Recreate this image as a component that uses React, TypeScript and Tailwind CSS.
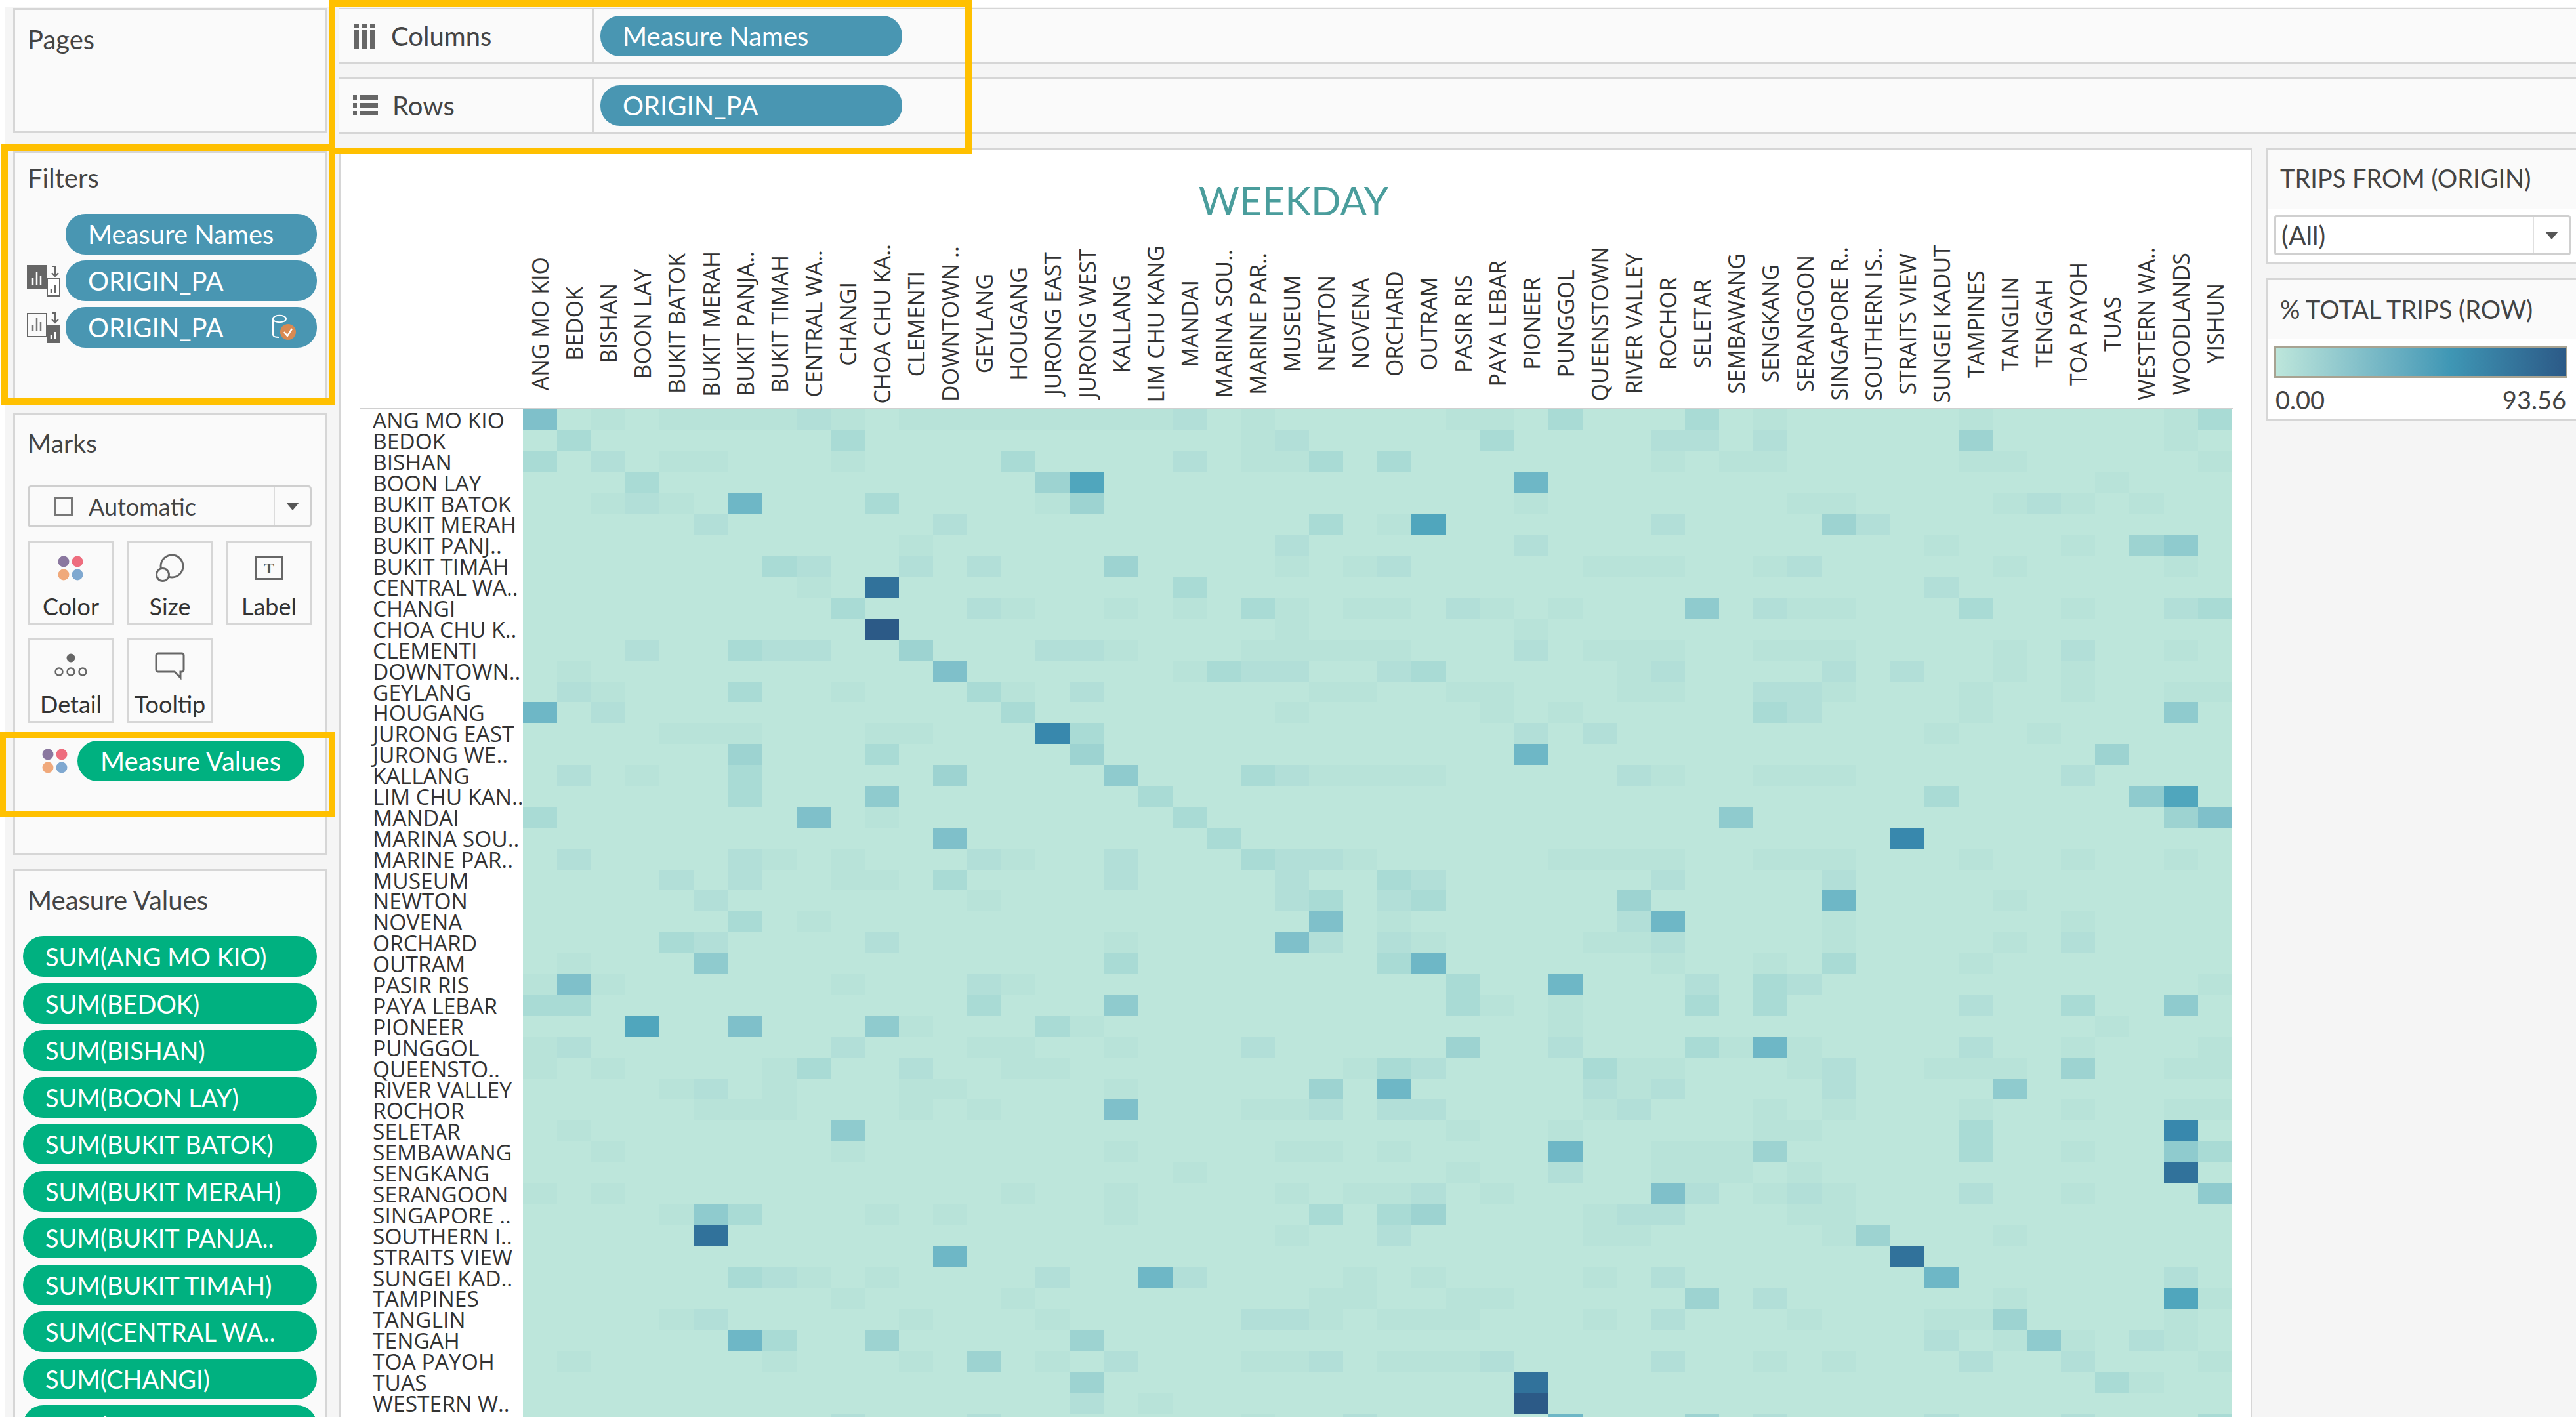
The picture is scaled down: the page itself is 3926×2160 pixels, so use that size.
import React from 'react';

/* ── Data ─────────────────────────────────────── */

const COLUMNS = [
  'ANG MO KIO', 'BEDOK', 'BISHAN', 'BOON LAY', 'BUKIT BATOK', 'BUKIT MERAH', 'BUKIT PANJA..', 'BUKIT TIMAH',
  'CENTRAL WA..', 'CHANGI', 'CHOA CHU KA..', 'CLEMENTI', 'DOWNTOWN ..', 'GEYLANG', 'HOUGANG', 'JURONG EAST',
  'JURONG WEST', 'KALLANG', 'LIM CHU KANG', 'MANDAI', 'MARINA SOU..', 'MARINE PAR..', 'MUSEUM', 'NEWTON',
  'NOVENA', 'ORCHARD', 'OUTRAM', 'PASIR RIS', 'PAYA LEBAR', 'PIONEER', 'PUNGGOL', 'QUEENSTOWN', 'RIVER VALLEY',
  'ROCHOR', 'SELETAR', 'SEMBAWANG', 'SENGKANG', 'SERANGOON', 'SINGAPORE R..', 'SOUTHERN IS..', 'STRAITS VIEW',
  'SUNGEI KADUT', 'TAMPINES', 'TANGLIN', 'TENGAH', 'TOA PAYOH', 'TUAS', 'WESTERN WA..', 'WOODLANDS', 'YISHUN',
];

const LEVELS = [
  '#bde6db', '#b8e3d9', '#b2dfd8', '#a9dbd5', '#9dd3d1', '#8fcbce', '#7fc0ca', '#6eb7c6',
  '#50a6bd', '#3888ad', '#31729b', '#2c5a87',
];

// row label, then "column:level" pairs for every cell darker than the base colour
const ROWS: [string, string][] = [
  ['ANG MO KIO', '0:6 2:1 4:1 5:1 6:1 7:1 8:2 9:1 11:1 12:1 13:1 14:1 15:1 16:1 17:1 18:1 19:2 21:1 27:1 28:1 30:3 34:3 36:1 42:1 48:1 49:3'],
  ['BEDOK', '1:3 9:3 21:1 22:2 28:3 33:2 34:2 36:2 42:4 48:1'],
  ['BISHAN', '0:3 2:2 4:1 5:1 9:1 14:3 19:2 21:1 22:1 23:3 25:3 33:1 35:1 36:1 42:1 43:1 49:1'],
  ['BOON LAY', '3:3 15:4 16:8 29:7 46:1'],
  ['BUKIT BATOK', '2:1 3:2 4:1 6:7 10:3 15:1 16:4 29:1 37:1 38:1 43:1 44:2 45:1 47:1'],
  ['BUKIT MERAH', '5:2 12:2 23:3 25:1 26:8 33:2 38:4 39:2'],
  ['BUKIT PANJ..', '11:1 22:2 29:2 41:1 45:1 47:4 48:5'],
  ['BUKIT TIMAH', '7:3 8:2 11:2 13:2 17:4 22:1 24:1 25:2 31:1 32:1 33:1 36:1 37:2 43:1 48:1'],
  ['CENTRAL WA..', '8:1 10:10 19:3 41:2'],
  ['CHANGI', '9:3 13:2 14:1 17:1 19:1 21:3 22:1 24:1 25:1 27:2 28:1 30:1 34:5 36:2 37:1 38:1 42:3 45:1 48:2 49:3'],
  ['CHOA CHU K..', '10:11 22:1 29:1'],
  ['CLEMENTI', '3:2 6:3 7:2 8:2 11:4 15:2 16:2 17:1 21:1 22:1 23:1 24:1 25:1 29:2 31:1 32:1 33:1 36:1 37:1 38:1 43:1 45:2 48:1'],
  ['DOWNTOWN..', '1:1 12:6 19:1 20:3 21:2 22:2 25:2 26:3 32:1 33:2 38:2 40:2 43:1 45:1'],
  ['GEYLANG', '1:2 2:1 6:3 9:1 13:3 14:1 16:2 23:1 24:1 27:1 28:1 32:1 33:1 36:2 37:2 38:1 42:1 45:1 48:1 49:1'],
  ['HOUGANG', '0:7 2:2 14:3 22:1 28:1 30:1 36:3 37:2 42:1 48:5'],
  ['JURONG EAST', '4:1 5:1 6:1 10:1 11:1 15:9 16:3 29:2 31:2 41:1 44:1'],
  ['JURONG WE..', '6:4 10:3 16:4 29:7 46:4'],
  ['KALLANG', '1:2 3:1 6:3 12:4 17:5 21:3 22:2 23:1 24:1 25:1 26:1 32:2 33:1 36:1 37:1 38:1 45:2'],
  ['LIM CHU KAN..', '6:3 10:5 18:3 41:3 47:5 48:8'],
  ['MANDAI', '0:3 8:6 10:1 19:3 35:5 48:4 49:6'],
  ['MARINA SOU..', '12:6 20:3 40:9'],
  ['MARINE PAR..', '1:2 6:2 7:1 9:1 13:2 14:1 17:2 21:3 22:2 23:2 24:1 30:1 31:1 32:1 33:1 36:1 37:1 38:1 42:1 45:1 48:1'],
  ['MUSEUM', '4:2 6:2 9:1 10:1 12:3 17:2 22:2 25:3 26:2 33:2 38:2'],
  ['NEWTON', '5:2 13:1 22:2 23:3 25:2 26:3 32:4 38:7 43:1'],
  ['NOVENA', '6:3 8:1 23:6 25:1 32:2 33:7 38:1 45:1'],
  ['ORCHARD', '4:3 5:2 10:2 17:1 22:6 23:2 25:2 26:1 31:1 32:1 33:2 38:1 43:1 45:2'],
  ['OUTRAM', '1:1 5:5 17:3 25:3 26:7 33:1 36:1 38:3 42:1'],
  ['PASIR RIS', '0:1 1:6 2:1 9:1 13:2 14:1 27:3 30:7 34:2 36:3 37:2 49:1'],
  ['PAYA LEBAR', '0:3 1:3 13:3 17:5 27:3 28:1 30:1 34:3 36:3 42:2 45:3 48:5'],
  ['PIONEER', '3:8 6:6 10:5 11:1 15:3 16:1 30:1 46:1'],
  ['PUNGGOL', '0:1 1:2 9:2 13:1 14:1 17:1 21:2 27:4 30:2 34:3 35:1 36:7 37:1 42:2 45:1 49:1'],
  ['QUEENSTO..', '0:1 2:1 7:1 8:3 11:2 14:1 15:1 24:1 25:3 26:2 31:3 32:1 33:1 37:1 38:2 41:1 42:1 43:1 45:4 48:1 49:1'],
  ['RIVER VALLEY', '4:1 5:2 7:1 11:1 12:1 17:1 23:4 25:7 31:2 32:1 33:2 38:2 43:5'],
  ['ROCHOR', '5:1 6:1 7:1 11:1 13:1 17:6 21:1 22:1 23:2 25:2 26:2 31:1 32:2 36:1 38:1 42:1 45:1 48:1 49:1'],
  ['SELETAR', '1:1 9:5 27:1 30:1 36:1 37:1 42:3 48:9'],
  ['SEMBAWANG', '2:1 9:1 17:1 22:1 23:1 25:1 30:7 33:1 34:1 35:1 36:4 42:3 45:1 48:5 49:3'],
  ['SENGKANG', '19:1 27:1 30:2 33:1 34:1 35:1 37:1 48:10'],
  ['SERANGOON', '0:1 2:1 14:1 17:1 22:1 24:1 25:1 26:2 28:1 33:6 34:2 36:1 37:2 38:1 42:2 45:1 49:5'],
  ['SINGAPORE ..', '4:1 5:5 6:3 10:1 12:1 17:1 23:3 25:3 26:4 31:1 32:2 33:2 37:1 38:1'],
  ['SOUTHERN I..', '5:10 22:1 25:2 31:1 32:1 38:1 39:4 43:1'],
  ['STRAITS VIEW', '12:7 40:10'],
  ['SUNGEI KAD..', '6:3 7:2 8:1 10:1 15:2 18:7 19:2 24:1 26:1 31:1 33:2 41:7 48:2'],
  ['TAMPINES', '9:1 14:1 23:1 24:1 27:1 28:1 34:4 36:2 43:1 48:8 49:1'],
  ['TANGLIN', '4:1 5:2 11:1 15:1 21:2 22:2 23:1 25:1 26:1 27:1 31:1 33:2 37:1 41:1 42:1 43:4 48:1'],
  ['TENGAH', '6:7 7:3 10:4 16:4 41:2 43:1 44:5 45:1 47:2 48:1'],
  ['TOA PAYOH', '1:1 7:1 11:1 13:4 15:1 17:2 21:1 22:1 23:2 25:1 26:1 27:1 28:2 33:2 36:1 38:1 42:2 45:2 49:1'],
  ['TUAS', '16:4 29:10 46:3 47:1'],
  ['WESTERN W..', '16:2 18:1 29:11'],
  ['WOODLANDS', '9:2 13:2 21:1 24:2 30:7 34:4 36:2 41:2 45:2 49:3'],
];

const MEASURES = [
  'SUM(ANG MO KIO)', 'SUM(BEDOK)', 'SUM(BISHAN)', 'SUM(BOON LAY)', 'SUM(BUKIT BATOK)', 'SUM(BUKIT MERAH)',
  'SUM(BUKIT PANJA..', 'SUM(BUKIT TIMAH)', 'SUM(CENTRAL WA..', 'SUM(CHANGI)', 'SUM(CHOA CHU KA..',
];

const cellsFor = (spec: string) => {
  const out = new Array<number>(50).fill(0);
  spec.split(' ').forEach(pair => {
    const [c, l] = pair.split(':').map(Number);
    out[c] = l;
  });
  return out;
};

/* ── Small parts ──────────────────────────────── */

const ColorDots: React.FC = () => (
  <svg width="40" height="40" viewBox="0 0 40 40">
    <circle cx="9" cy="10" r="8.5" fill="#8a779f" />
    <circle cx="30" cy="10" r="8.5" fill="#ee6d7e" />
    <circle cx="9" cy="30" r="8.5" fill="#f0a97b" />
    <circle cx="30" cy="30" r="8.5" fill="#7fa8d0" />
  </svg>
);

const BluePill: React.FC<{ children: React.ReactNode; className?: string }> = ({ children, className }) => (
  <div className={`h-[62px] rounded-[30px] bg-[#4996b2] text-white text-[40px] leading-[60px] pl-[34px] flex items-center justify-between ${className ?? ''}`}>
    {children}
  </div>
);

const ShelfIcon: React.FC<{ filled: boolean }> = ({ filled }) => (
  <svg width="52" height="48" viewBox="0 0 52 48" className="shrink-0">
    <rect x="1" y={filled ? 1 : 3} width="29" height="35" fill={filled ? '#666' : 'none'} stroke="#666" strokeWidth="2" />
    <path d="M9 30V20M15 30V10M21 30V16" stroke={filled ? '#fff' : '#777'} strokeWidth="2.5" fill="none" />
    <path d="M38 2h5v14m-5-4 5 5 5-5" stroke="#666" strokeWidth="2" fill="none" />
    <rect x="31" y={21} width="19" height="26" fill={filled ? '#fff' : '#666'} stroke="#666" strokeWidth="2" />
    <path d="M37 42v-6M43 42V31" stroke={filled ? '#666' : '#fff'} strokeWidth="2.5" fill="none" />
  </svg>
);

const Card: React.FC<{ label: string; children: React.ReactNode }> = ({ label, children }) => (
  <div className="w-[132px] h-[129px] border-[3px] border-[#d6d6d6] flex flex-col items-center pt-[17px] text-[36px] leading-[44px] text-[#333]">
    <div className="h-[44px] flex items-center justify-center">{children}</div>
    <div className="mt-[14px]">{label}</div>
  </div>
);

const Arrow: React.FC = () => (
  <svg width="22" height="14" viewBox="0 0 22 14">
    <polygon points="1,1 21,1 11,13" fill="#555" />
  </svg>
);

/* ── App ──────────────────────────────────────── */

export default function App() {
  return (
    <div className="relative w-[3926px] h-[2160px] overflow-hidden bg-white pl-[7px] pt-[10px] font-[Lato,sans-serif] text-[#444]">
      <div className="flex h-full bg-[#f5f5f5]">
        {/* Left cards */}
        <div className="w-[510px] shrink-0 pl-[13px] pt-[2px] flex flex-col gap-[20px] overflow-hidden">
          <div className="w-[478px] h-[190px] shrink-0 border-[3px] border-[#d6d6d6] bg-[#fafafa] pl-[19px] pt-[22px] text-[40px] leading-[46px] mb-[8px]">
            Pages
          </div>

          <div className="w-[478px] h-[379px] shrink-0 border-[3px] border-[#d6d6d6] bg-[#fafafa] pl-[19px] pt-[15px] text-[40px] leading-[46px]">
            Filters
            <div className="mt-[32px] flex flex-col gap-[9px]">
              <BluePill className="ml-[58px] w-[383px]">Measure Names</BluePill>
              <div className="flex items-center gap-[7px] -ml-[1px]">
                <ShelfIcon filled />
                <BluePill className="w-[383px]">ORIGIN_PA</BluePill>
              </div>
              <div className="flex items-center gap-[7px] -ml-[1px]">
                <ShelfIcon filled={false} />
                <BluePill className="w-[383px] pr-[30px]">
                  ORIGIN_PA
                  <svg width="40" height="40" viewBox="0 0 40 40">
                    <path d="M3 7v24c0 3 3 4 9 4M3 7c0-7 20-7 20 0s-20 7-20 0" fill="none" stroke="#fff" strokeWidth="2" />
                    <circle cx="26" cy="27" r="12" fill="#d98a52" />
                    <path d="M20 27l5 6 7-11" fill="none" stroke="#fff" strokeWidth="2.5" />
                  </svg>
                </BluePill>
              </div>
            </div>
          </div>

          <div className="w-[478px] h-[675px] shrink-0 border-[3px] border-[#d6d6d6] bg-[#fafafa] pl-[19px] pt-[20px] text-[39px] leading-[46px]">
            Marks
            <div className="mt-[42px] w-[433px] h-[64px] border-[3px] border-[#cfcfcf] rounded-[5px] flex items-center text-[#444]">
              <div className="flex-1 flex items-center pl-[38px] gap-[24px]">
                <div className="w-[28px] h-[28px] border-[3px] border-[#777]" />
                <span className="text-[36px]">Automatic</span>
              </div>
              <div className="w-[55px] h-full border-l-[2px] border-[#dcdcdc] flex items-center justify-center">
                <Arrow />
              </div>
            </div>
            <div className="mt-[20px] w-[440px] flex flex-wrap gap-x-[19px] gap-y-[20px]">
              <Card label="Color"><ColorDots /></Card>
              <Card label="Size">
                <svg width="44" height="44" viewBox="0 0 44 44" fill="none" stroke="#666" strokeWidth="3">
                  <circle cx="25" cy="19" r="17" />
                  <circle cx="11" cy="32" r="9.5" fill="#fafafa" />
                </svg>
              </Card>
              <Card label="Label">
                <div className="w-[43px] h-[36px] border-[3px] border-[#666] flex items-center justify-center font-['Liberation_Serif',serif] font-bold text-[24px] leading-none text-[#555]">
                  T
                </div>
              </Card>
              <Card label="Detail">
                <svg width="50" height="38" viewBox="0 0 50 38" fill="none" stroke="#666" strokeWidth="2.5">
                  <circle cx="25" cy="7" r="6.5" fill="#666" stroke="none" />
                  <circle cx="7" cy="28" r="5.5" />
                  <circle cx="25" cy="28" r="5.5" />
                  <circle cx="43" cy="28" r="5.5" />
                </svg>
              </Card>
              <Card label="Tooltip">
                <svg width="46" height="42" viewBox="0 0 46 42" fill="none" stroke="#666" strokeWidth="3">
                  <path d="M5 2h36a3 3 0 0 1 3 3v22a3 3 0 0 1-3 3h-2v9l-9-9H5a3 3 0 0 1-3-3V5a3 3 0 0 1 3-3z" />
                </svg>
              </Card>
            </div>
            <div className="mt-[27px] flex items-center gap-[14px] pl-[22px]">
              <ColorDots />
              <div className="w-[346px] h-[62px] rounded-[31px] bg-[#00b180] text-white text-[40px] flex items-center pl-[35px]">
                Measure Values
              </div>
            </div>
          </div>

          <div className="w-[478px] flex-1 min-h-0 border-[3px] border-b-0 border-[#d6d6d6] bg-[#fafafa] pt-[22px] text-[40px] leading-[46px]">
            <div className="pl-[19px]">Measure Values</div>
            <div className="mt-[32px] pl-[12px] flex flex-col gap-[9.5px]">
              {MEASURES.map(m => (
                <div key={m} className="w-[448px] h-[62px] shrink-0 rounded-[31px] bg-[#00b180] text-white text-[38px] flex items-center pl-[34px]">
                  {m}
                </div>
              ))}
            </div>
          </div>
        </div>

        {/* Main column */}
        <div className="flex-1 flex flex-col min-w-0">
          <div className="pt-[2px] flex flex-col gap-[20px] shrink-0">
            {[
              { label: 'Columns', pill: 'Measure Names', icon: 'columns' },
              { label: 'Rows', pill: 'ORIGIN_PA', icon: 'rows' },
            ].map(s => (
              <div key={s.label} className="h-[86px] border-y-[3px] border-[#d6d6d6] border-t-[2px] bg-[#fafafa] flex items-center text-[40px]">
                <div className="w-[388px] h-full border-r-[2px] border-[#d6d6d6] flex items-center pl-[21px] gap-[22px]">
                  {s.icon === 'columns' ? (
                    <svg width="36" height="38" viewBox="0 0 36 38" fill="#666">
                      <path d="M2 0h7v6H2zM14 0h7v6h-7zM26 0h7v6h-7zM2 10h7v28H2zM14 10h7v28h-7zM26 10h7v28h-7z" />
                    </svg>
                  ) : (
                    <svg width="38" height="32" viewBox="0 0 38 32" fill="#666">
                      <path d="M0 0h6v7H0zM10 0h28v7H10zM0 12h6v7H0zM10 12h28v7H10zM0 24h6v7H0zM10 24h28v7H10z" />
                    </svg>
                  )}
                  {s.label}
                </div>
                <BluePill className="ml-[10px] w-[460px]">{s.pill}</BluePill>
              </div>
            ))}
          </div>

          <div className="mt-[21px] flex-1 flex min-h-0">
            {/* Heatmap sheet */}
            <div className="w-[2915px] shrink-0 bg-white border-x-[2px] border-t-[3px] border-[#d6d6d6] flex flex-col overflow-hidden">
              <div className="h-[149px] shrink-0 pt-[42px] pr-[6px] text-center text-[60px] leading-[70px] text-[#4a9d9c]">WEEKDAY</div>
              <div className="h-[245px] shrink-0 flex pl-[278px] pb-[12px] font-['Open_Sans',sans-serif] text-[34px] text-[#333]">
                {COLUMNS.map(c => (
                  <div key={c} className="w-[52.1px] shrink-0 flex items-center justify-center">
                    <span className="[writing-mode:vertical-rl] rotate-180 whitespace-nowrap leading-none">{c}</span>
                  </div>
                ))}
              </div>
              <div className="ml-[29px] w-[2855px] shrink-0 border-t-[2px] border-[#d0d0d0] font-['Open_Sans',sans-serif] text-[33.6px] text-[#333]">
                {ROWS.map(([name, spec]) => (
                  <div key={name} className="h-[31.9px] flex">
                    <div className="w-[249px] shrink-0 pl-[20px] leading-[32px] whitespace-nowrap">{name}</div>
                    <div className="flex-1 flex">
                      {cellsFor(spec).map((lvl, i) => (
                        <div key={i} className="w-[52.1px] shrink-0" style={{ backgroundColor: LEVELS[lvl] }} />
                      ))}
                    </div>
                  </div>
                ))}
              </div>
            </div>

            {/* Right side cards */}
            <div className="flex-1 ml-[21px] flex flex-col gap-[21px] text-[38px]">
              <div className="h-[178px] border-[3px] border-r-0 border-[#d6d6d6] bg-white">
                <div className="h-[90px] bg-[#fafafa] pl-[19px] pt-[20px] leading-[46px]">TRIPS FROM (ORIGIN)</div>
                <div className="ml-[10px] mt-[10px] w-[452px] h-[61px] border-[3px] border-[#d0d0d0] rounded-[4px] flex items-center text-[40px]">
                  <div className="flex-1 pl-[8px]">(All)</div>
                  <div className="w-[55px] h-full border-l-[2px] border-[#e0e0e0] flex items-center justify-center">
                    <Arrow />
                  </div>
                </div>
              </div>
              <div className="h-[218px] border-[3px] border-r-0 border-[#d6d6d6] bg-white">
                <div className="h-[89px] bg-[#fafafa] pl-[19px] pt-[21px] leading-[46px]">% TOTAL TRIPS (ROW)</div>
                <div className="ml-[10px] mt-[12px] w-[447px] h-[48px] border-[3px] border-[#a8a392] bg-gradient-to-r from-[#bde6db] via-[#3f97b5] via-60% to-[#2c5a87]" />
                <div className="ml-[12px] mt-[10px] w-[443px] flex justify-between leading-[46px]">
                  <span>0.00</span>
                  <span>93.56</span>
                </div>
              </div>
            </div>
          </div>
        </div>
      </div>

      {/* Highlight frames drawn over the screenshot */}
      <div className="absolute left-[501px] top-0 w-[980px] h-[235px] border-[10px] border-[#ffc000]" />
      <div className="absolute left-[2px] top-[220px] w-[509px] h-[397px] border-[10px] border-[#ffc000]" />
      <div className="absolute left-0 top-[1116px] w-[510px] h-[129px] border-[9px] border-[#ffc000]" />
    </div>
  );
}
